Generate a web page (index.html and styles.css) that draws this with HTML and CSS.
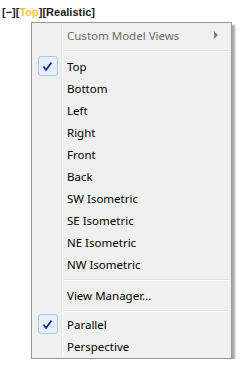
FILE: index.html
```html
<!DOCTYPE html>
<html lang="en">
    <head>
        <meta charset="UTF-8">
        <title>Viewport Menu</title>
        <link rel="stylesheet" href="styles.css">
    </head>
    <body>
        <div class="viewport-label">[−][<span class="active">Top</span>][Realistic]</div>

        <div class="menu">
            <div class="menu-item disabled">
                <span class="gutter"></span>
                <span class="label">Custom Model Views</span>
                <span class="arrow"></span>
            </div>
            <div class="separator"><span class="gutter"></span><span class="line"></span></div>

            <div class="menu-item checked">
                <span class="gutter"><span class="check">
                    <svg width="11" height="11" viewBox="0 0 11 11"><path d="M1.5 5.5 L4 9 L9.5 1.5" fill="none" stroke="#1d2a8a" stroke-width="1.8"/></svg>
                </span></span>
                <span class="label">Top</span>
            </div>
            <div class="menu-item"><span class="gutter"></span><span class="label">Bottom</span></div>
            <div class="menu-item"><span class="gutter"></span><span class="label">Left</span></div>
            <div class="menu-item"><span class="gutter"></span><span class="label">Right</span></div>
            <div class="menu-item"><span class="gutter"></span><span class="label">Front</span></div>
            <div class="menu-item"><span class="gutter"></span><span class="label">Back</span></div>
            <div class="menu-item"><span class="gutter"></span><span class="label">SW Isometric</span></div>
            <div class="menu-item"><span class="gutter"></span><span class="label">SE Isometric</span></div>
            <div class="menu-item"><span class="gutter"></span><span class="label">NE Isometric</span></div>
            <div class="menu-item"><span class="gutter"></span><span class="label">NW Isometric</span></div>
            <div class="separator"><span class="gutter"></span><span class="line"></span></div>

            <div class="menu-item"><span class="gutter"></span><span class="label">View Manager...</span></div>
            <div class="separator short"><span class="gutter"></span><span class="line"></span></div>

            <div class="menu-item checked">
                <span class="gutter"><span class="check">
                    <svg width="11" height="11" viewBox="0 0 11 11"><path d="M1.5 5.5 L4 9 L9.5 1.5" fill="none" stroke="#1d2a8a" stroke-width="1.8"/></svg>
                </span></span>
                <span class="label">Parallel</span>
            </div>
            <div class="menu-item"><span class="gutter"></span><span class="label">Perspective</span></div>
        </div>
    </body>
</html>
```

FILE: styles.css
```css
body {
    margin: 0;
    background: #fff;
    font-family: 'Noto Sans', 'Open Sans', sans-serif;
    color: #000;
}
.viewport-label {
    font-family: 'Liberation Sans', sans-serif;
    font-weight: bold;
    font-size: 11px;
    color: #1a1a1a;
    padding-left: 2px;
    margin-top: 3px;
    height: 19px;
    line-height: 19px;
}
.viewport-label .active {
    color: #efc83a;
}
.menu {
    margin-left: 31px;
    width: 199px;
    background: #f0f0f0;
    border: 1px solid #979797;
    padding: 1px 0;
    box-shadow: 3px 3px 2px rgba(0,0,0,0.35);
}
.menu-item {
    display: flex;
    align-items: center;
    height: 22px;
    font-size: 11.5px;
}
.gutter {
    width: 29px;
    align-self: stretch;
    border-right: 1px solid #e2e3e3;
    box-shadow: 1px 0 0 #fff;
    display: flex;
    align-items: center;
    justify-content: center;
    flex-shrink: 0;
}
.label {
    padding-left: 5px;
    flex-grow: 1;
}
.disabled .label {
    color: #6d6d6d;
}
.arrow {
    width: 0;
    height: 0;
    border-top: 4px solid transparent;
    border-bottom: 4px solid transparent;
    border-left: 4px solid #808080;
    margin-right: 13px;
}
.check {
    width: 20px;
    height: 20px;
    box-sizing: border-box;
    border: 1px solid #a8c6ef;
    border-radius: 3px;
    background: #e6effb;
    display: flex;
    align-items: center;
    justify-content: center;
    margin-left: 2px;
}
.separator {
    display: flex;
    height: 9px;
}
.separator.short {
    height: 7px;
}
.separator .line {
    flex-grow: 1;
    margin: 4px 2px 0 2px;
    height: 1px;
    background: #e0e0e0;
    border-bottom: 1px solid #fff;
}
```
